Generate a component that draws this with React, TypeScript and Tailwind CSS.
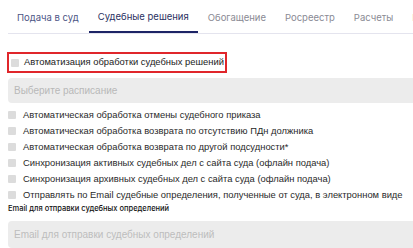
const TABS = ['Подача в суд', 'Судебные решения', 'Обогащение', 'Росреестр', 'Расчеты', 'Реестры'];

const OPTIONS = [
  'Автоматическая обработка отмены судебного приказа',
  'Автоматическая обработка возврата по отсутствию ПДн должника',
  'Автоматическая обработка возврата по другой подсудности*',
  'Синхронизация активных судебных дел с сайта суда (офлайн подача)',
  'Синхронизация архивных судебных дел с сайта суда (офлайн подача)',
  'Отправлять по Email судебные определения, полученные от суда, в электронном виде',
];

function Box() {
  return <span className="w-[8px] h-[8px] bg-[#dcdcdc] rounded-[1px] shrink-0" />;
}

export default function App() {
  return (
    <div className="w-[413px] h-[248px] overflow-hidden bg-white font-['Liberation_Sans',Arial,sans-serif]">
      {/* Tabs */}
      <div className="flex ml-2 w-[440px] border-b border-[#e4e4ee] whitespace-nowrap font-['Inter',sans-serif]">
        {TABS.map((t, i) => (
          <div
            key={t}
            className={
              'h-[33px] pt-[3px] px-[9px] flex items-center text-[9.5px] mr-px ' +
              (i === 1
                ? 'text-[#2b3263] border-b-2 border-[#1d2466] -mb-px'
                : i === 0
                ? 'text-[#4d5585]'
                : 'text-[#8a8a94]')
            }
          >
            {t}
          </div>
        ))}
      </div>

      <div className="pl-2 pt-[18px] w-[440px]">
        {/* Highlighted main option */}
        <div className="-ml-px w-[220px] h-[21px] border-2 border-[#e0262b] flex items-center gap-[5px] pl-[2px] whitespace-nowrap">
          <Box />
          <span className="text-[9.4px] text-[#222]">Автоматизация обработки судебных решений</span>
        </div>

        {/* Schedule select */}
        <div className="mt-[5px] h-[25px] rounded-[4px] bg-[#ececec] flex items-center pl-[6px] text-[10px] text-[#b8b8b8]">
          Выберите расписание
        </div>

        {/* Options */}
        <div className="mt-[4px] flex flex-col">
          {OPTIONS.map((o) => (
            <div key={o} className="h-[16px] flex items-center gap-[7px] whitespace-nowrap">
              <Box />
              <span className="text-[9.4px] text-[#2a2a2a]">{o}</span>
            </div>
          ))}
        </div>

        <div className="mt-[1px] text-[7.5px] font-medium text-[#111] leading-[10px] font-['Inter',sans-serif]">
          Email для отправки судебных определений
        </div>

        <div className="mt-[7px] h-[27px] rounded-[4px] bg-[#ececec] flex items-center pl-[6px] text-[10px] text-[#bdbdbd]">
          Email для отправки судебных определений
        </div>
      </div>
    </div>
  );
}
